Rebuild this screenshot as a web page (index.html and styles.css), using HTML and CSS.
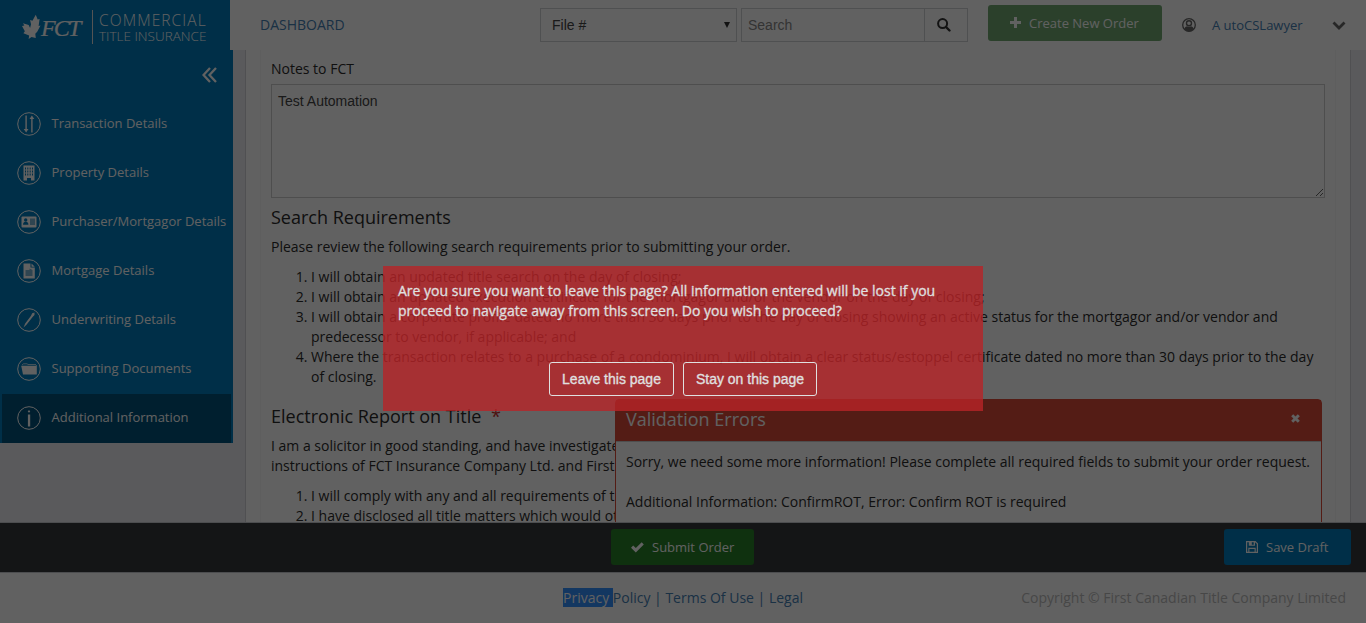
FILE: index.html
```html
<!DOCTYPE html>
<html lang="en">
<head>
<meta charset="utf-8">
<title>FCT Commercial Title Insurance</title>
<link rel="stylesheet" href="styles.css">
</head>
<body>
<div class="page">
  <header class="header">
    <div class="brand">
      <svg class="leaf" width="20" height="26" viewBox="0 0 20 26"><path d="M14.500 0L16.500 5L18.500 4.500L17.500 12L19.500 11.500L16 18L14 20L14.500 24.500L10 23.500L7 25.500L7.500 22L1.500 19.500L3 17.500L0 12L2.500 11.500L1 9L7 11L8.500 14L9.500 10L8.500 5.500L11 6.500Z"/></svg>
      <span class="fct">FCT</span>
      <span class="brand-rule"></span>
      <span class="brand-text"><span class="b1">COMMERCIAL</span><span class="b2">TITLE INSURANCE</span></span>
    </div>
    <a class="dash">DASHBOARD</a>
    <div class="select"><span>File #</span><svg width="6" height="6" viewBox="0 0 6 6"><path d="M0 0H6L3 6Z"/></svg></div>
    <div class="search"><span class="search-input">Search</span><span class="search-btn"><svg width="14" height="14" viewBox="0 0 14 14"><circle cx="5.600" cy="5.600" r="4.500" fill="none" stroke="#333" stroke-width="2"/><path d="M9 9L12.500 12.500" stroke="#333" stroke-width="2.400" stroke-linecap="round"/></svg></span></div>
    <div class="btn create"><svg width="11" height="11" viewBox="0 0 11 11"><path d="M4 0H7V4H11V7H7V11H4V7H0V4H4Z"/></svg><span>Create New Order</span></div>
    <svg class="user-icon" width="14" height="14" viewBox="0 0 14 14"><circle cx="7" cy="7" r="6.300" fill="none" stroke="#666" stroke-width="1.300"/><circle cx="7" cy="5.300" r="2.500" fill="none" stroke="#666" stroke-width="1.400"/><path d="M2.300 11Q3 8.300 5 8.200Q7 9.500 9 8.200Q11 8.300 11.700 11Q9.500 13.500 7 13.500Q4.500 13.500 2.300 11Z" fill="#666"/></svg>
    <a class="user">A utoCSLawyer</a>
    <svg class="chev" width="14" height="10" viewBox="0 0 14 10"><path d="M1.500 1.500L7 7L12.500 1.500" fill="none" stroke="#666" stroke-width="2.800"/></svg>
  </header>

  <div class="middle">
    <nav class="sidebar">
      <div class="toggle"><svg width="15" height="16" viewBox="0 0 15 16"><path d="M8 1L1.500 8L8 15M14 1L7.500 8L14 15" fill="none" stroke="#fff" stroke-width="2.300"/></svg></div>
      <a class="item"><svg class="ico" viewBox="0 0 24 24"><circle class="ring" cx="12" cy="12" r="11.300"/><path class="f" d="M8.400 3.500H9.800V17H11.500L9.100 20.500L6.700 17H8.400ZM14.200 20.500H15.600V7H17.300L14.900 3.500L12.500 7H14.200Z"/></svg><span>Transaction Details</span></a>
      <a class="item"><svg class="ico" viewBox="0 0 24 24"><circle class="ring" cx="12" cy="12" r="11.300"/><path class="f" fill-rule="evenodd" d="M6.500 4.500H17.500V19.500H14V17H10V19.500H6.500ZM8 6.500V8.500H9V6.500ZM10.300 6.500V8.500H11.300V6.500ZM12.700 6.500V8.500H13.700V6.500ZM15 6.500V8.500H16V6.500ZM8 9.500V11.500H9V9.500ZM10.300 9.500V11.500H11.300V9.500ZM12.700 9.500V11.500H13.700V9.500ZM15 9.500V11.500H16V9.500ZM8 12.500V14.500H9V12.500ZM10.300 12.500V14.500H11.300V12.500ZM12.700 12.500V14.500H13.700V12.500ZM15 12.500V14.500H16V12.500Z"/></svg><span>Property Details</span></a>
      <a class="item"><svg class="ico" viewBox="0 0 24 24"><circle class="ring" cx="12" cy="12" r="11.300"/><rect class="f" x="4.500" y="6.500" width="15" height="11" rx="1"/><circle class="d" cx="8.700" cy="10" r="1.700"/><path class="d" d="M6 14.700Q6 11.800 8.700 11.800Q11.400 11.800 11.400 14.700Z"/><path class="p" d="M13 8.500H18V15H13Z"/></svg><span>Purchaser/Mortgagor Details</span></a>
      <a class="item"><svg class="ico" viewBox="0 0 24 24"><circle class="ring" cx="12" cy="12" r="11.300"/><path class="f" d="M6.500 4.500H13.500V8.500H17.800V19.500H6.500ZM14.500 4.500L17.800 7.700H14.500Z"/><path class="p" d="M8.500 11H12.500V9.500L15.500 11V17H8.500Z"/></svg><span>Mortgage Details</span></a>
      <a class="item"><svg class="ico" viewBox="0 0 24 24"><circle class="ring" cx="12" cy="12" r="11.300"/><path class="f" d="M6.500 19.500L8.200 15.500L14 7.800L15.200 5.300L17.500 4.500V7L15.600 8.900L9.500 16.700Z"/></svg><span>Underwriting Details</span></a>
      <a class="item"><svg class="ico" viewBox="0 0 24 24"><circle class="ring" cx="12" cy="12" r="11.300"/><path class="f" d="M4.200 8.700H18.400L19.800 8V17.500H6Z"/><path d="M5 8L6.500 6.800H10L11 7.500H19" fill="none" stroke="#fff" stroke-width=".7"/></svg><span>Supporting Documents</span></a>
      <a class="item active"><svg class="ico" viewBox="0 0 24 24"><circle class="ring" cx="12" cy="12" r="11.300"/><path class="f" d="M10.900 8.500H13.200V20.500H10.900ZM12 4L13.300 5.400L12 6.800L10.700 5.400Z"/></svg><span>Additional Information</span></a>
    </nav>
    <main class="main">
      <div class="panel">
        <label class="label">Notes to FCT</label>
        <textarea class="notes">Test Automation</textarea>
        <h4 class="title">Search Requirements</h4>
        <p class="para">Please review the following search requirements prior to submitting your order.</p>
        <ol class="list">
          <li>I will obtain an updated title search on the day of closing;</li>
          <li>I will obtain an updated execution certificate for the mortgagor and/or the vendor on the day of closing;</li>
          <li>I will obtain a corporate profile dated no more than 30 days prior to the day of closing showing an active status for the mortgagor and/or vendor and<br>predecessor to vendor, if applicable; and</li>
          <li>Where the transaction relates to a purchase of a condominium, I will obtain a clear status/estoppel certificate dated no more than 30 days prior to the day<br>of closing.</li>
        </ol>
        <h4 class="title">Electronic Report on Title <span class="req">*</span></h4>
        <p class="para">I am a solicitor in good standing, and have investigated<br>instructions of FCT Insurance Company Ltd. and First</p>
        <ol class="list">
          <li>I will comply with any and all requirements of the</li>
          <li>I have disclosed all title matters which would otherwise</li>
        </ol>
      </div>
    </main>
    <section class="toast">
      <div class="toast-head"><span>Validation Errors</span><svg width="9" height="9" viewBox="0 0 9 9"><path d="M1.200 1.200L7.800 7.800M7.800 1.200L1.200 7.800" stroke="#fff" stroke-width="2.900"/></svg></div>
      <div class="toast-body"><p>Sorry, we need some more information! Please complete all required fields to submit your order request.</p><p>Additional Information: ConfirmROT, Error: Confirm ROT is required</p></div>
    </section>
  </div>

  <div class="actions">
    <div></div>
    <div class="btn submit"><svg width="13" height="11" viewBox="0 0 13 11"><path d="M0 5.700L2.200 3.500L4.800 6.100L10.700 0.300L12.800 2.500L4.800 10.400Z"/></svg><span>Submit Order</span></div>
    <div class="btn save"><svg width="12" height="12" viewBox="0 0 12 12"><path fill-rule="evenodd" d="M0 0H9.500L12 2.500V12H0ZM1.200 1.200V10.800H2.300V6.800H9.700V10.800H10.800V3L9 1.200V4.800H2.800V1.200ZM5.800 1.200V3.800H7.700V1.200ZM3.400 8V10.800H8.600V8Z"/></svg><span>Save Draft</span></div>
  </div>
  <footer class="footer">
    <div></div>
    <div class="links"><span class="sel">Privacy </span>Policy | Terms Of Use | Legal</div>
    <div class="copy">Copyright © First Canadian Title Company Limited</div>
  </footer>
</div>

<div class="overlay"></div>
<div class="dialog">
  <p class="msg">Are you sure you want to leave this page? All information entered will be lost if you<br>proceed to navigate away from this screen. Do you wish to proceed?</p>
  <div class="dialog-btns"><span class="dbtn leave">Leave this page</span><span class="dbtn stay">Stay on this page</span></div>
</div>
</body>
</html>
```
FILE: styles.css
```css
* { box-sizing: border-box; }
body { margin: 0; overflow: hidden; font: 14px/20px "Open Sans", sans-serif; color: #2b2b2b; background: #fff; }
p, h4, ol { margin: 0; }
.page { height: 623px; display: flex; flex-direction: column; }
.header { height: 50px; flex: none; display: flex; align-items: flex-start; background: #fff; }
.brand { width: 230px; height: 50px; background: #007cbd; color: #fff; display: flex; padding-left: 22px; }
.leaf { width: 19px; margin-top: 14px; fill: #fff; }
.fct { width: 51px; font: italic 24px/30px "Liberation Serif", serif; letter-spacing: -1.8px; margin-top: 13px; -webkit-text-stroke: .2px #fff; }
.brand-rule { width: 1px; height: 34px; margin-top: 10px; background: #ddd; margin-right: 6px; }
.brand-text { display: flex; flex-direction: column; padding-top: 11px; white-space: nowrap; font-weight: 300; }
.b1 { font-size: 15.500px; line-height: 18px; letter-spacing: 1.1px; }
.b2 { font-size: 13.500px; line-height: 15px; letter-spacing: 0; }
.dash { margin: 15px 0 0 30px; width: 280px; color: #4580b4; font-size: 14px; }
.select { width: 197px; height: 34px; margin-top: 8px; border: 1px solid #d0d2d6; display: flex; align-items: center; justify-content: space-between; padding: 0 6px 0 11px; font: 14px "Liberation Sans", sans-serif; color: #444; fill: #333; }
.search { width: 227px; height: 34px; margin: 8px 0 0 4px; border: 1px solid #d0d2d6; display: flex; font: 14px/32px "Liberation Sans", sans-serif; color: #888; }
.search-input { width: 183px; padding-left: 6px; border-right: 1px solid #d0d2d6; }
.search-btn { flex: 1; display: flex; align-items: center; padding-left: 12px; }
.btn { display: flex; align-items: center; color: #fff; fill: #fff; border-radius: 3px; font-size: 13px; height: 36px; white-space: nowrap; }
.create { margin: 5px 0 0 20px; width: 174px; padding-left: 22px; gap: 8px; background: #71a972; }
.create svg { margin-top: -1px; }
.user-icon { margin: 18px 0 0 20px; }
.user { margin: 15px 0 0 16px; width: 120px; font-size: 13px; color: #4580b4; }
.chev { margin-top: 21px; }
.middle { position: relative; height: 473px; flex: none; display: flex; align-items: flex-start; overflow: hidden; background: #ecedf1; border-bottom: 1px solid #c9cbd0; }
.sidebar { width: 233px; height: 393px; background: #007cbd; flex: none; color: #fff; }
.toggle { height: 50px; padding: 17px 16px 0 0; display: flex; justify-content: flex-end; }
.item { height: 49px; margin: 0 2px; padding: 0 0 3px 15px; display: flex; align-items: center; font-size: 13px; gap: 10.500px; white-space: nowrap; }
.ico { width: 24px; height: 24px; flex: none; margin-top: 2px; }
.ring { fill: none; stroke: #fff; stroke-width: 1; }
.f { fill: #fff; }
.d { fill: #007cbd; }
.p { fill: #7db5d6; }
.active { background: #00517b; }
.main { width: 1106px; height: 473px; margin-left: 12px; border: solid #d2d3d8; border-width: 0 1px; background: #fff; padding: 0 14px; }
.panel { height: 473px; border: solid #f6f6f6; border-width: 0 1px; padding: 9px 10px 0; }
.label { display: block; height: 25px; }
.notes { display: block; width: 1054px; height: 114px; border: 1px solid #ccc; padding: 6px; font: 14px/20px "Liberation Sans", sans-serif; color: #444; background: #fff; }
.title { font-size: 18px; font-weight: 400; line-height: 20px; margin-top: 9px; }
.req { color: #c9302c; margin-left: 5px; }
.para { margin: 10px 0; white-space: nowrap; }
.list { padding-left: 40px; white-space: nowrap; }
.list + .title { margin-top: 19px; }
.toast { position: absolute; left: 615px; top: 349px; width: 707px; height: 140px; border: 1px solid #dd4b39; border-radius: 4px; background: #fff; }
.toast-head { height: 41px; background: #dd4b39; color: #fff; font-size: 18px; display: flex; justify-content: space-between; align-items: center; padding: 0 21px 4px 10px; }
.toast-body { border-top: 1px solid #ccc; padding: 10px; white-space: nowrap; }
.toast-body p + p { margin-top: 20px; }
.actions { height: 49px; flex: none; background: #35393c; display: grid; grid-template-columns: 611px 613px 127px; padding-top: 6px; }
.submit { background: #298028; width: 143px; padding-left: 20px; gap: 8px; }
.save { background: #007cbd; padding-left: 22px; gap: 8px; }
.footer { flex: 1; border-top: 1px solid #c9cbd0; display: grid; grid-template-columns: 563px 1fr auto; padding: 15px 20px 0 0; }
.links { color: #4580b4; }
.sel { display: inline-block; white-space: pre; background: #3390ff; color: #fff; line-height: 19px; }
.copy { color: #bbb; }
.overlay { position: fixed; inset: 0; background: rgba(0, 0, 0, .62); }
.dialog { position: fixed; left: 383px; top: 266px; width: 600px; height: 145px; background: #b72327; opacity: .8; color: #fff; padding: 15px; }
.msg { white-space: nowrap; -webkit-text-stroke: .3px #fff; }
.dialog-btns { display: flex; gap: 9px; justify-content: center; margin-top: 41px; }
.dbtn { height: 34px; border: 1px solid #fff; border-radius: 3px; font: 14px/32px "Liberation Sans", sans-serif; text-align: center; -webkit-text-stroke: .3px #fff; }
.leave { width: 125px; }
.stay { width: 134px; }
```
